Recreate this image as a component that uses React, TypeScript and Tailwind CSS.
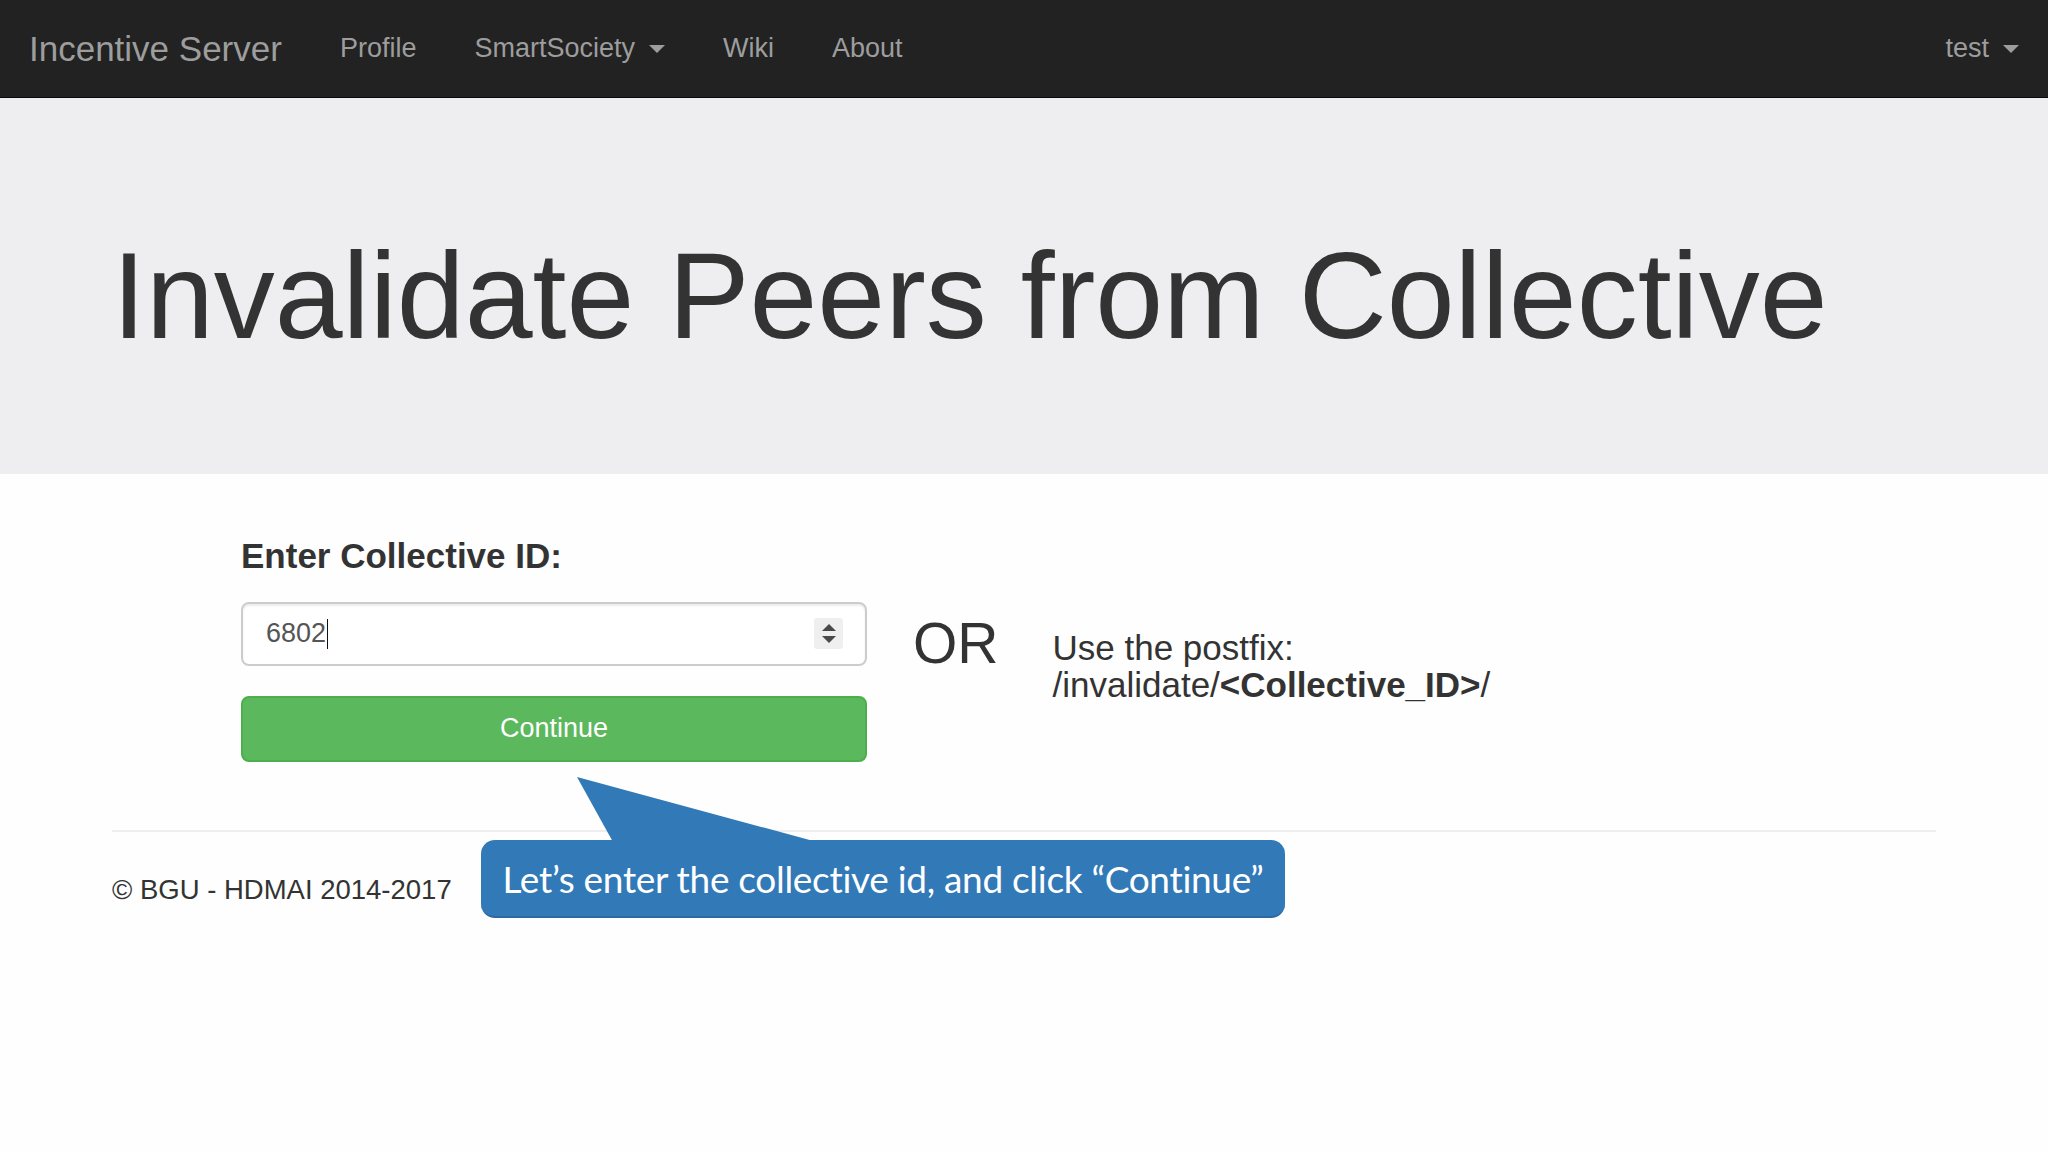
import React from "react";

function Caret() {
  return (
    <span className="inline-block w-0 h-0 ml-[14px] align-middle border-l-[8px] border-r-[8px] border-t-[8px] border-l-transparent border-r-transparent border-t-[#9d9d9d]" />
  );
}

export default function App() {
  return (
    <div className="relative min-h-[1152px] bg-[#fefefe] font-['Liberation_Sans',Arial,sans-serif] text-[#333]">
      {/* Navbar */}
      <nav className="h-[98px] bg-[#222222] border-b border-[#080808] flex items-center justify-between">
        <div className="flex items-center">
          <span className="px-[29px] text-[35px] text-[#9d9d9d] leading-none">Incentive Server</span>
          <span className="px-[29px] text-[27px] text-[#9d9d9d] leading-none">Profile</span>
          <span className="px-[29px] text-[27px] text-[#9d9d9d] leading-none flex items-center">
            SmartSociety
            <Caret />
          </span>
          <span className="px-[29px] text-[27px] text-[#9d9d9d] leading-none">Wiki</span>
          <span className="px-[29px] text-[27px] text-[#9d9d9d] leading-none">About</span>
        </div>
        <div className="flex items-center pr-[29px]">
          <span className="text-[27px] text-[#9d9d9d] leading-none flex items-center">
            test
            <Caret />
          </span>
        </div>
      </nav>

      {/* Jumbotron */}
      <div className="h-[376px] bg-[#eeedf0] pt-[131px] pl-[112px]">
        <h1 className="text-[122px] leading-[1.1] text-[#333] font-normal">
          Invalidate Peers from Collective
        </h1>
      </div>

      {/* Main content */}
      <div className="pl-[112px] pt-[63px]">
        <div className="flex items-start">
          <div className="ml-[129px] w-[626px] flex flex-col">
            <div className="text-[35px] font-bold leading-[1.1]">Enter Collective ID:</div>
            <div className="mt-[26px] h-[64px] border-2 border-[#cccccc] rounded-[8px] bg-white shadow-[inset_0_2px_2px_rgba(0,0,0,0.075)] flex items-center justify-between pl-[23px] pr-[22px]">
              <span className="text-[27px] text-[#555] leading-none flex items-center">
                6802
                <span className="inline-block w-[1px] h-[30px] bg-[#111] ml-[1px]" />
              </span>
              <div className="w-[29px] h-[31px] bg-[#efefef] rounded-[3px] flex flex-col items-center justify-center gap-[5px]">
                <span className="w-0 h-0 border-l-[7px] border-r-[7px] border-b-[7px] border-l-transparent border-r-transparent border-b-[#4a4a4a]" />
                <span className="w-0 h-0 border-l-[7px] border-r-[7px] border-t-[7px] border-l-transparent border-r-transparent border-t-[#4a4a4a]" />
              </div>
            </div>
            <div className="mt-[30px] h-[66px] bg-[#5cb85c] border-2 border-[#4cae4c] rounded-[8px] flex items-center justify-center text-white text-[27px]">
              Continue
            </div>
          </div>
          <div className="ml-[46px] mt-[75px] text-[57px] leading-[1.1]">OR</div>
          <div className="ml-[54px] mt-[92px] text-[35px] leading-[37px]">
            <div>Use the postfix:</div>
            <div>
              /invalidate/<b>&lt;Collective_ID&gt;</b>/
            </div>
          </div>
        </div>

        <div className="mt-[68px] w-[1824px] h-[2px] bg-[#eeeeee]" />
        <div className="mt-[38px] text-[27.5px] leading-[1.42857]">© BGU - HDMAI 2014-2017</div>
      </div>

      {/* Callout annotation */}
      <svg className="absolute left-[560px] top-[770px]" width="270" height="75" viewBox="0 0 270 75">
        <polygon points="17,7 53,72 257,72" fill="#3279b7" />
      </svg>
      <div className="absolute left-[481px] top-[840px] w-[804px] h-[78px] rounded-[14px] bg-[#3279b7] border-b-2 border-[#2c69a3] flex items-center justify-center">
        <span className="text-white text-[37px] font-['Lato','Open_Sans',sans-serif] leading-none tracking-[-0.3px]">
          Let’s enter the collective id, and click “Continue”
        </span>
      </div>
    </div>
  );
}
